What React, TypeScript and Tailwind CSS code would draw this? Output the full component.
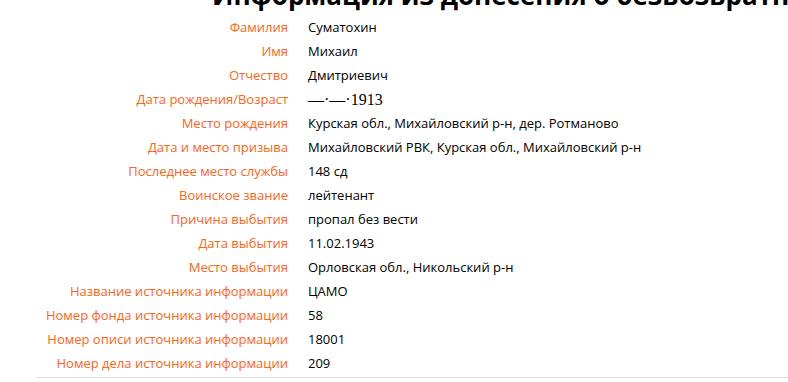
import React from "react";

const rows: [string, string][] = [
  ["Фамилия", "Суматохин"],
  ["Имя", "Михаил"],
  ["Отчество", "Дмитриевич"],
  ["Дата рождения/Возраст", "__DATE__"],
  ["Место рождения", "Курская обл., Михайловский р-н, дер. Ротманово"],
  ["Дата и место призыва", "Михайловский РВК, Курская обл., Михайловский р-н"],
  ["Последнее место службы", "148 сд"],
  ["Воинское звание", "лейтенант"],
  ["Причина выбытия", "пропал без вести"],
  ["Дата выбытия", "11.02.1943"],
  ["Место выбытия", "Орловская обл., Никольский р-н"],
  ["Название источника информации", "ЦАМО"],
  ["Номер фонда источника информации", "58"],
  ["Номер описи источника информации", "18001"],
  ["Номер дела источника информации", "209"],
];

export default function App() {
  return (
    <div className="w-[788px] h-[382px] overflow-hidden bg-white" style={{ fontFamily: '"Open Sans", "DejaVu Sans", sans-serif' }}>
      <h1 className="-mt-[22px] h-[34px] pl-[212px] whitespace-nowrap text-[26px] leading-[34px] font-bold text-black">
        Информация из донесения о безвозвратных потерях
      </h1>
      <div className="ml-[36px] mt-[4px] border-b border-[#dddddd] pb-[1px]">
        {rows.map(([label, value]) => (
          <div key={label} className="flex h-[24px] items-center text-[13px]">
            <div className="w-[252px] shrink-0 text-right text-[#ff6418]">{label}</div>
            <div className="pl-[20px] text-[#000000] whitespace-nowrap">
              {value === "__DATE__" ? (
                <span className="text-[16px]" style={{ fontFamily: '"Liberation Serif", serif' }}>—·—·1913</span>
              ) : (
                value
              )}
            </div>
          </div>
        ))}
      </div>
    </div>
  );
}
